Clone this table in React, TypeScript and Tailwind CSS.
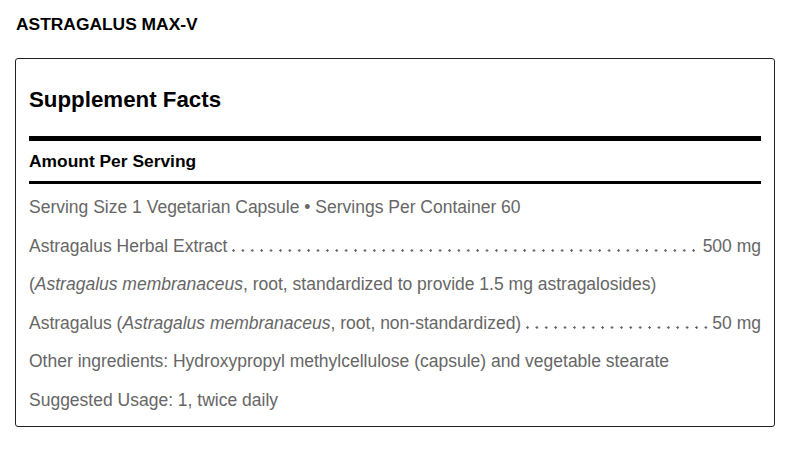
import React from "react";

const rows = [
  { type: "text", text: "Serving Size 1 Vegetarian Capsule • Servings Per Container 60" },
  { type: "leader", name: <>Astragalus Herbal Extract</>, amount: "500 mg" },
  {
    type: "text",
    text: (
      <>
        (<i>Astragalus membranaceus</i>, root, standardized to provide 1.5 mg astragalosides)
      </>
    ),
  },
  {
    type: "leader",
    name: (
      <>
        Astragalus (<i>Astragalus membranaceus</i>, root, non-standardized)
      </>
    ),
    amount: "50 mg",
  },
  { type: "text", text: "Other ingredients: Hydroxypropyl methylcellulose (capsule) and vegetable stearate" },
  { type: "text", text: "Suggested Usage: 1, twice daily" },
];

export default function App() {
  return (
    <div className="w-[800px] h-[454px] bg-white px-[15px] pt-[14px] font-['Liberation_Sans',Arial,sans-serif]">
      <h1 className="text-[17.4px] leading-[20px] font-bold text-black ml-[1px]">ASTRAGALUS MAX-V</h1>

      <div className="mt-[24px] w-[760px] h-[369px] border border-[#222] rounded-[3px] px-[13px] pt-[28px]">
        <h2 className="text-[22.3px] leading-[26px] font-bold text-black">Supplement Facts</h2>
        <div className="mt-[23px] h-[5px] bg-black" />
        <div className="pt-[10px] pb-[10px] text-[17.4px] leading-[20px] font-bold text-black">
          Amount Per Serving
        </div>
        <div className="h-[3px] bg-black" />

        <div className="pt-[13px] flex flex-col gap-[18.5px] text-[17.5px] leading-[20px] text-[#666]">
          {rows.map((r, i) =>
            r.type === "text" ? (
              <div key={i} className="whitespace-nowrap">
                {r.text}
              </div>
            ) : (
              <div key={i} className="flex whitespace-nowrap">
                <span>{r.name}</span>
                <span className="flex-1 self-end mb-[4px] ml-[5px] mr-[3px] h-[3px] bg-[radial-gradient(circle_at_1.5px_1.5px,#666_1px,transparent_1.4px)] bg-size-[9.4px_3px] bg-repeat-x" />
                <span>{r.amount}</span>
              </div>
            )
          )}
        </div>
      </div>
    </div>
  );
}
